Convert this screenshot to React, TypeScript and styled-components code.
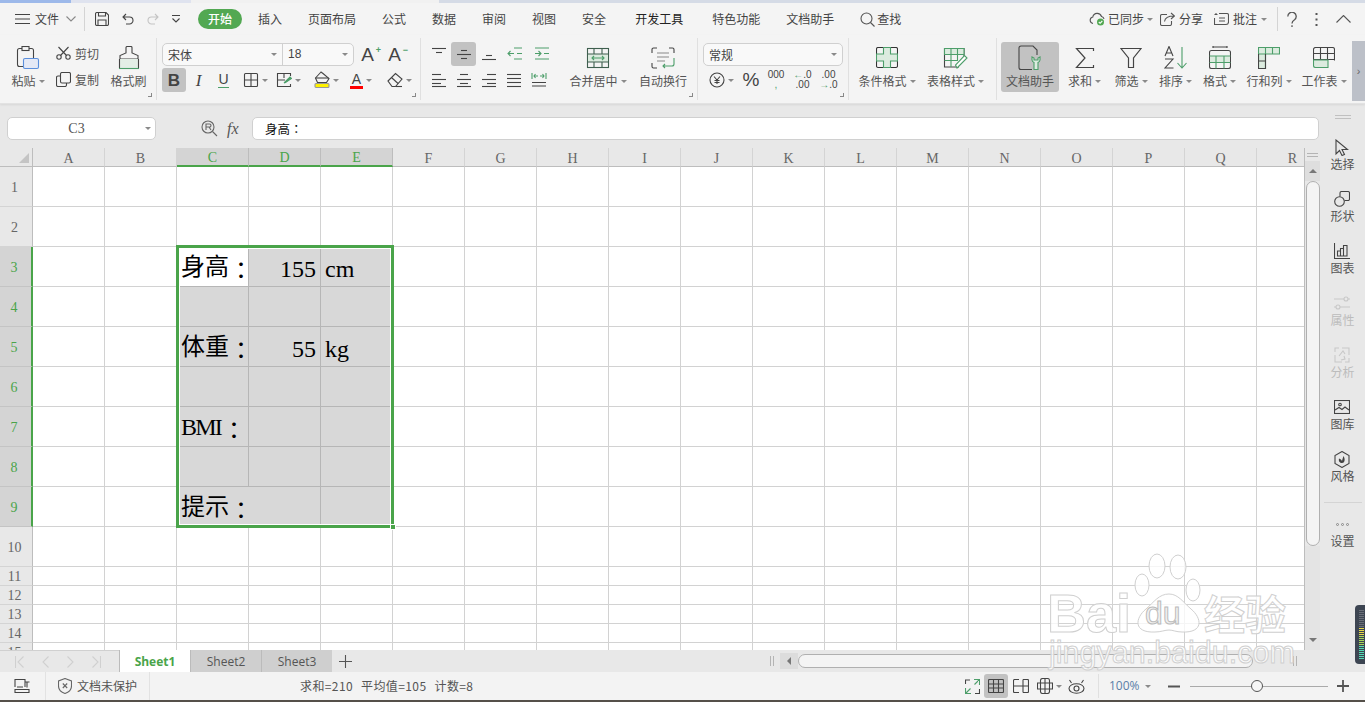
import React from 'react';
import styled, { createGlobalStyle } from 'styled-components';

const colors = {
  text: '#444',
  label: '#555',
  line: '#d2d2d2',
  lineSel: '#b6b6b6',
  sel: '#d8d8d8',
  green: '#4aa44a',
  panel: '#e8e8e8',
  ribbon: '#f4f4f4',
};

const GlobalStyle = createGlobalStyle`
  html, body { margin: 0; padding: 0; background: #e8e8e8; }
  * { box-sizing: border-box; }
  body { font-family: "Noto Sans CJK SC", "Liberation Sans", sans-serif; font-size: 12px; color: #444; }
`;

const Page = styled.div`
  position: relative;
  width: 1365px;
  height: 702px;
  overflow: hidden;
  display: flex;
  flex-direction: column;
`;

/* top strip + menu */
const TopStrip = styled.div`
  height: 3px;
  background: #f1f1f1;
  display: flex;
`;
const StripPart = styled.div<{ $w: number; $c: string }>`
  width: ${({ $w }) => $w}px;
  background: ${({ $c }) => $c};
`;
const MenuRow = styled.div`
  height: 32px;
  background: ${colors.ribbon};
  display: flex;
  align-items: center;
  padding: 0 14px 0 15px;
  line-height: 1;
`;
const Cluster = styled.div<{ $gap?: number; $ml?: number }>`
  display: flex;
  align-items: center;
  gap: ${({ $gap }) => $gap ?? 4}px;
  margin-left: ${({ $ml }) => $ml ?? 0}px;
`;
const MenuSep = styled.div<{ $ml: number; $h?: number }>`
  width: 1px;
  height: ${({ $h }) => $h ?? 24}px;
  background: #d4d4d4;
  margin-left: ${({ $ml }) => $ml}px;
`;
const Pill = styled.div`
  width: 44px;
  height: 20px;
  border-radius: 10px;
  background: #52a852;
  color: #fff;
  display: flex;
  align-items: center;
  justify-content: center;
  margin-left: 18px;
  font-weight: 500;
`;
const MenuTabs = styled.div`
  display: flex;
  align-items: center;
  gap: 26px;
  margin-left: 16px;
`;
const MenuTab = styled.span<{ $extra?: boolean; $dark?: boolean }>`
  margin-left: ${({ $extra }) => ($extra ? 3 : 0)}px;
  color: ${({ $dark }) => ($dark ? '#222' : colors.text)};
  white-space: nowrap;
`;
const MenuRight = styled.div`
  margin-left: auto;
  display: flex;
  align-items: center;
`;

/* ribbon */
const Ribbon = styled.div`
  height: 69px;
  background: ${colors.ribbon};
  display: flex;
  border-bottom: 1px solid #e2e2e2;
  box-shadow: 0 1px 2px rgba(0, 0, 0, 0.08);
  position: relative;
  z-index: 1;
`;
const Group = styled.div<{ $w: number; $pl?: number; $end?: boolean }>`
  position: relative;
  width: ${({ $w }) => $w}px;
  height: 62px;
  margin-top: 3px;
  padding-left: ${({ $pl }) => $pl ?? 0}px;
  display: flex;
  border-right: ${({ $end }) => ($end ? 'none' : '1px solid #e0e0e0')};
`;
const Launcher = styled.span`
  position: absolute;
  right: 4px;
  bottom: 3px;
  width: 4px;
  height: 4px;
  border-right: 1px solid #888;
  border-bottom: 1px solid #888;
`;
const LargeTool = styled.div<{ $w: number; $active?: boolean; $ml?: number }>`
  width: ${({ $w }) => $w}px;
  height: ${({ $active }) => ($active ? 50 : 62)}px;
  margin-left: ${({ $ml }) => $ml ?? 0}px;
  margin-top: ${({ $active }) => ($active ? 4 : 0)}px;
  padding-top: ${({ $active }) => ($active ? 4 : 8)}px;
  display: flex;
  flex-direction: column;
  align-items: center;
  border-radius: 3px;
  background: ${({ $active }) => ($active ? '#c2c2c2' : 'transparent')};
`;
const LargeIcon = styled.div`
  height: 24px;
  display: flex;
  align-items: center;
  justify-content: center;
`;
const LargeLabel = styled.div`
  margin-top: 2px;
  height: 18px;
  line-height: 18px;
  display: flex;
  align-items: center;
  gap: 3px;
  color: ${colors.label};
  white-space: nowrap;
`;
const Caret = styled.span`
  display: inline-block;
  width: 0;
  height: 0;
  border-left: 3px solid transparent;
  border-right: 3px solid transparent;
  border-top: 3px solid #8a8a8a;
  flex: none;
`;
const SmallCol = styled.div`
  width: 45px;
  display: flex;
  flex-direction: column;
  gap: 8px;
  padding-top: 6px;
`;
const SmallTool = styled.div`
  height: 18px;
  display: flex;
  align-items: center;
  gap: 4px;
  color: ${colors.label};
  white-space: nowrap;
`;
const Stack = styled.div`
  display: flex;
  flex-direction: column;
  gap: 2px;
  padding-top: 4px;
`;
const ToolRow = styled.div`
  display: flex;
  align-items: center;
  height: 24px;
`;
const IconBtn = styled.div<{ $w: number; $active?: boolean; $mr?: number }>`
  width: ${({ $w }) => $w}px;
  height: 24px;
  margin-right: ${({ $mr }) => $mr ?? 0}px;
  display: flex;
  align-items: center;
  justify-content: center;
  gap: 3px;
  border-radius: 3px;
  background: ${({ $active }) => ($active ? '#c2c2c2' : 'transparent')};
`;
const ComboBox = styled.div<{ $w: number }>`
  width: ${({ $w }) => $w}px;
  height: 23px;
  background: #f9f9f9;
  border: 1px solid #d0d0d0;
  border-radius: 5px;
  display: flex;
  align-items: stretch;
`;
const ComboPart = styled.div<{ $w?: number; $line?: boolean; $num?: boolean }>`
  flex: ${({ $w }) => ($w ? `0 0 ${$w}px` : '1')};
  display: flex;
  align-items: center;
  justify-content: space-between;
  padding: 0 5px;
  color: ${colors.text};
  border-left: ${({ $line }) => ($line ? '1px solid #d0d0d0' : 'none')};
  font-family: ${({ $num }) => ($num ? '"Liberation Sans", sans-serif' : 'inherit')};
`;
const SizeLetter = styled.span`
  position: relative;
  font-family: "Liberation Sans", sans-serif;
  font-size: 19px;
  color: ${colors.text};
  width: 27px;
  text-align: center;
  line-height: 23px;
`;
const SizeMark = styled.sup`
  position: absolute;
  top: -4px;
  right: 0;
  font-size: 9px;
  color: #4d9e6a;
  font-weight: 700;
`;
const FontLetter = styled.span<{ $kind: 'b' | 'i' | 'u' }>`
  font-family: ${({ $kind }) => ($kind === 'i' ? '"Liberation Serif"' : '"Liberation Sans"')}, sans-serif;
  font-size: ${({ $kind }) => ($kind === 'u' ? 14 : 17)}px;
  font-weight: ${({ $kind }) => ($kind === 'b' ? 700 : 400)};
  font-style: ${({ $kind }) => ($kind === 'i' ? 'italic' : 'normal')};
  line-height: 15px;
  color: ${colors.text};
  border-bottom: ${({ $kind }) => ($kind === 'u' ? '1px solid #4d9e6a' : 'none')};
`;
const ColorLetter = styled.span`
  font-family: "Liberation Sans", sans-serif;
  font-size: 14px;
  line-height: 14px;
  color: ${colors.text};
  border-bottom: 3px solid #f00;
  width: 13px;
  text-align: center;
`;
const NumberMark = styled.span<{ $size?: number }>`
  font-family: "Liberation Sans", sans-serif;
  font-size: ${({ $size }) => $size ?? 10}px;
  line-height: ${({ $size }) => ($size ? 18 : 10)}px;
  color: ${colors.text};
  text-align: center;
  white-space: pre;
`;
const Tint = styled.span`
  color: #4d9e6a;
`;
const CollapseStrip = styled.div`
  width: 13px;
  height: 60px;
  margin-top: 6px;
  background: #bcc0c8;
  display: flex;
  align-items: center;
  justify-content: center;
  color: #666;
  font-size: 11px;
  font-family: "Liberation Sans", sans-serif;
`;

/* work area */
const Work = styled.div`
  height: 546px;
  display: flex;
`;
const Main = styled.div`
  width: 1320px;
  display: flex;
  flex-direction: column;
`;
const FormulaBar = styled.div`
  height: 44px;
  padding: 13px 1px 8px 7px;
  display: flex;
  align-items: stretch;
  background: ${colors.panel};
`;
const NameBox = styled.div`
  width: 149px;
  background: #fff;
  border: 1px solid #d0d0d0;
  border-radius: 5px;
  display: flex;
  align-items: center;
  padding-right: 4px;
`;
const NameText = styled.span`
  flex: 1;
  text-align: center;
  font-family: "Liberation Serif", serif;
  font-size: 14px;
  color: #555;
`;
const FormulaTools = styled.div`
  width: 96px;
  padding-left: 45px;
  display: flex;
  align-items: center;
  gap: 9px;
`;
const Fx = styled.span`
  font-family: "Liberation Serif", serif;
  font-style: italic;
  font-size: 16px;
  color: #555;
`;
const FormulaInput = styled.div`
  flex: 1;
  background: #fff;
  border: 1px solid #d0d0d0;
  border-radius: 5px;
  display: flex;
  align-items: center;
  padding-left: 12px;
  font-family: "Noto Sans CJK TC", sans-serif;
  font-size: 12.5px;
  color: #111;
`;
const SheetRow = styled.div`
  flex: 1;
  display: flex;
  min-height: 0;
`;
const GridClip = styled.div`
  position: relative;
  width: 1304px;
  height: 502px;
  overflow: hidden;
  background: #fff;
`;
const Grid = styled.div`
  display: grid;
  width: 1329px;
  grid-template-columns: 33px repeat(18, 72px);
  grid-template-rows: 19px repeat(10, 40px) repeat(5, 19px);
`;
const Corner = styled.div`
  background: ${colors.panel};
  border-right: 1px solid #bdbdbd;
  border-bottom: 1px solid #bdbdbd;
  display: flex;
  justify-content: flex-end;
  align-items: flex-end;
  padding: 0 3px 3px 0;
`;
const CornerMark = styled.span`
  width: 0;
  height: 0;
  border-left: 10px solid transparent;
  border-bottom: 10px solid #c4c4c4;
`;
const ColHead = styled.div<{ $sel: boolean }>`
  background: ${({ $sel }) => ($sel ? '#d4d4d4' : colors.panel)};
  color: ${({ $sel }) => ($sel ? colors.green : '#666')};
  border-right: 1px solid ${({ $sel }) => ($sel ? '#bdbdbd' : '#d4d4d4')};
  border-bottom: ${({ $sel }) => ($sel ? `2px solid ${colors.green}` : '1px solid #bdbdbd')};
  display: flex;
  align-items: center;
  justify-content: center;
  padding-top: 3px;
  font-family: "Liberation Serif", serif;
  font-size: 14px;
  line-height: 1;
`;
const RowHead = styled.div<{ $sel: boolean }>`
  background: ${({ $sel }) => ($sel ? '#d4d4d4' : colors.panel)};
  color: ${({ $sel }) => ($sel ? colors.green : '#666')};
  border-bottom: 1px solid ${({ $sel }) => ($sel ? '#c4c4c4' : '#d4d4d4')};
  border-right: ${({ $sel }) => ($sel ? `2px solid ${colors.green}` : '1px solid #bdbdbd')};
  display: flex;
  align-items: center;
  justify-content: center;
  padding: 2px 3px 0 0;
  font-family: "Liberation Serif", serif;
  font-size: 14px;
  line-height: 1;
`;
const Cell = styled.div<{ $sel: boolean; $active: boolean; $span?: number; $right?: boolean }>`
  grid-column: span ${({ $span }) => $span ?? 1};
  background: ${({ $sel, $active }) => ($sel && !$active ? colors.sel : '#fff')};
  border-right: 1px solid ${({ $sel }) => ($sel ? colors.lineSel : colors.line)};
  border-bottom: 1px solid ${({ $sel }) => ($sel ? colors.lineSel : colors.line)};
  display: flex;
  align-items: center;
  justify-content: ${({ $right }) => ($right ? 'flex-end' : 'flex-start')};
  padding: 5px 4px 0 4px;
  white-space: nowrap;
  font-family: "Liberation Serif", "Noto Sans CJK TC", serif;
  font-size: 24px;
  line-height: 1;
  color: #000;
`;
const Narrow = styled.span`
  letter-spacing: -1.8px;
  margin-right: 1px;
`;
const Colon = styled.span`
  vertical-align: -4px;
`;
const Selection = styled.div`
  position: absolute;
  left: 176px;
  top: 97px;
  width: 218px;
  height: 283px;
  border: 3px solid ${colors.green};
  box-shadow: inset 0 0 0 1px #fff;
  pointer-events: none;
`;
const Handle = styled.span`
  position: absolute;
  right: -5px;
  bottom: -5px;
  width: 4px;
  height: 4px;
  background: ${colors.green};
  border: 1px solid #fff;
  box-sizing: content-box;
`;
const VScroll = styled.div`
  width: 16px;
  border-left: 1px solid #bdbdbd;
  background: ${colors.panel};
  display: flex;
  flex-direction: column;
  align-items: center;
`;
const ScrollGrip = styled.div`
  width: 11px;
  height: 4px;
  margin-top: 5px;
  border-top: 1px solid #b4b4b4;
  border-bottom: 1px solid #b4b4b4;
`;
const ScrollBtn = styled.div`
  width: 15px;
  height: 20px;
  margin-top: 4px;
  background: #dedede;
  display: flex;
  align-items: center;
  justify-content: center;
`;
const ArrowUp = styled.span`
  border-left: 4px solid transparent;
  border-right: 4px solid transparent;
  border-bottom: 4px solid #777;
`;
const ArrowDown = styled.span`
  border-left: 4px solid transparent;
  border-right: 4px solid transparent;
  border-top: 4px solid #777;
`;
const VThumb = styled.div`
  width: 14px;
  height: 365px;
  margin-left: 1px;
  background: #f4f4f4;
  border: 1px solid #b0b0b0;
  border-radius: 7px;
`;
const VTrack = styled.div`
  flex: 1;
  width: 100%;
  background: #e4e4e4;
  display: flex;
  align-items: flex-end;
  justify-content: center;
  padding-bottom: 8px;
`;

/* side panel */
const Side = styled.div`
  width: 45px;
  background: ${colors.panel};
  display: flex;
  flex-direction: column;
  align-items: center;
`;
const SideGrip = styled.div`
  width: 16px;
  height: 4px;
  margin: 11px 0 19px;
  border-top: 1px solid #c0c0c0;
  border-bottom: 1px solid #c0c0c0;
`;
const SideItem = styled.div<{ $off?: boolean }>`
  height: 52px;
  display: flex;
  flex-direction: column;
  align-items: center;
  color: ${({ $off }) => ($off ? '#bcbcbc' : colors.label)};
  line-height: 16px;
`;
const SideIcon = styled.div`
  height: 18px;
  display: flex;
  align-items: center;
  justify-content: center;
`;
const SideLine = styled.div`
  width: 38px;
  height: 1px;
  background: #d4d4d4;
  margin-bottom: 12px;
`;
const Dots = styled.div`
  height: 18px;
  display: flex;
  gap: 2px;
  align-items: center;
`;
const Dot = styled.span`
  width: 3px;
  height: 3px;
  border: 1px solid #888;
  border-radius: 50%;
`;

/* sheet tabs */
const TabBar = styled.div`
  height: 22px;
  background: ${colors.panel};
  display: flex;
  align-items: stretch;
`;
const SheetNav = styled.div`
  width: 119px;
  padding-left: 15px;
  display: flex;
  align-items: center;
  gap: 18px;
  border-top: 1px solid #d0d0d0;
`;
const SheetTab = styled.div<{ $active?: boolean }>`
  width: 71px;
  display: flex;
  align-items: center;
  justify-content: center;
  font-family: "Open Sans", "Liberation Sans", sans-serif;
  font-size: 12px;
  font-weight: ${({ $active }) => ($active ? 700 : 400)};
  color: ${({ $active }) => ($active ? colors.green : '#555')};
  background: ${({ $active }) => ($active ? '#fff' : '#cfcfcf')};
  border-left: 1px solid #bbb;
`;
const AddSheet = styled.div`
  width: 26px;
  display: flex;
  align-items: center;
  justify-content: center;
`;
const HScrollArea = styled.div`
  flex: 1;
  display: flex;
  align-items: center;
  padding: 0 68px 0 412px;
`;
const SplitMark = styled.span`
  flex: none;
  width: 4px;
  height: 10px;
  border-left: 1px solid #b4b4b4;
  border-right: 1px solid #b4b4b4;
`;
const HBtn = styled.div`
  flex: none;
  width: 18px;
  height: 16px;
  margin-left: 6px;
  background: #dcdcdc;
  display: flex;
  align-items: center;
  justify-content: center;
`;
const ArrowLeft = styled.span`
  border-top: 4px solid transparent;
  border-bottom: 4px solid transparent;
  border-right: 4px solid #777;
`;
const HThumb = styled.div`
  flex: 1;
  height: 14px;
  background: #f4f4f4;
  border: 1px solid #b0b0b0;
  border-radius: 7px;
  margin-right: 40px;
`;

/* status bar */
const StatusBar = styled.div`
  height: 28px;
  background: #f3f3f3;
  display: flex;
  align-items: center;
  color: ${colors.label};
  line-height: 1;
`;
const StatusCell = styled.div<{ $w: number; $pl: number; $line?: boolean }>`
  width: ${({ $w }) => $w}px;
  height: 100%;
  padding-left: ${({ $pl }) => $pl}px;
  display: flex;
  align-items: center;
  gap: 5px;
  border-right: ${({ $line }) => ($line ? '1px solid #e2e2e2' : 'none')};
`;
const Stats = styled.div`
  flex: 1;
  padding-left: 150px;
  display: flex;
  gap: 8px;
  letter-spacing: 0.4px;
`;
const ViewBtn = styled.div<{ $w: number; $active?: boolean }>`
  width: ${({ $w }) => $w}px;
  height: 24px;
  border-radius: 3px;
  display: flex;
  align-items: center;
  justify-content: center;
  gap: 3px;
  background: ${({ $active }) => ($active ? '#c2c2c2' : 'transparent')};
`;
const ZoomValue = styled.div`
  width: 70px;
  height: 24px;
  margin-left: 10px;
  padding-left: 10px;
  display: flex;
  align-items: center;
  gap: 5px;
  color: #5a7ea8;
  border-left: 1px solid #e0e0e0;
  font-family: "Open Sans", "Liberation Sans", sans-serif;
`;
const Slider = styled.div`
  position: relative;
  width: 138px;
  height: 1px;
  background: #aaa;
  margin: 0 9px 0 10px;
`;
const Knob = styled.span`
  position: absolute;
  left: 61px;
  top: -6px;
  width: 12px;
  height: 12px;
  border-radius: 50%;
  background: #f6f6f6;
  border: 1px solid #555;
`;
const BottomEdge = styled.div`
  height: 2px;
  background: #55504a;
`;

/* things that float over the page */
const Watermark = styled.svg`
  position: absolute;
  left: 1042px;
  top: 552px;
  pointer-events: none;
`;
const Meter = styled.div`
  position: absolute;
  right: 0;
  top: 605px;
  width: 10px;
  height: 59px;
  padding: 5px 1px 4px 4px;
  background: #3d4552;
  border-radius: 4px 0 0 4px;
`;
const MeterBars = styled.div`
  height: 100%;
  background:
    repeating-linear-gradient(to bottom, transparent 0 1px, #3d4552 1px 2px),
    linear-gradient(to bottom, #6a6f78 0 36%, #e6d84a 36% 52%, #a8d65a 52% 72%, #53dcb4 72% 100%);
`;

/* icon drawing */
const Glyph = styled.svg<{ $c?: string; $sw?: number }>`
  display: block;
  flex: none;
  fill: none;
  stroke: ${({ $c }) => $c ?? '#444'};
  stroke-width: ${({ $sw }) => $sw ?? 1.1};
`;
type IcoProps = { w?: number; h?: number; c?: string; sw?: number; children: React.ReactNode };
const Ico = ({ w = 16, h = 16, c, sw, children }: IcoProps) => (
  <Glyph width={w} height={h} viewBox={`0 0 ${w} ${h}`} $c={c} $sw={sw}>{children}</Glyph>
);
const G = '#4d9e6a';
const Lines = ({ rows, c }: { rows: number[][]; c?: string }) => (
  <Ico w={16} h={16} c={c}>
    {rows.map(([a, b, y], i) => <path key={i} d={`M${a} ${y + 0.5}H${b}`} />)}
  </Ico>
);

const PasteIcon = () => (
  <Ico w={24} h={24}>
    <rect x="1.5" y="2.5" width="16" height="18" rx="2" />
    <rect x="6" y="0.5" width="7" height="4" fill="#f4f4f4" />
    <rect x="7.5" y="12.5" width="15" height="10" rx="1.5" fill="#e4e9f6" stroke="#5b8fdc" />
  </Ico>
);
const CutIcon = () => (
  <Ico w={15} h={14}>
    <circle cx="3" cy="11" r="2.2" /><circle cx="12" cy="11" r="2.2" />
    <path d="M4.5 9.5 12.5 1M10.5 9.5 2.5 1" />
  </Ico>
);
const CopyIcon = () => (
  <Ico w={15} h={15}>
    <rect x="4.5" y="0.5" width="10" height="10.5" rx="1.5" />
    <path d="M4 4H2a1.5 1.5 0 0 0-1.5 1.5v7.5A1.5 1.5 0 0 0 2 14.500h7a1.500 1.500 0 0 0 1.500-1.500v-2" />
  </Ico>
);
const BrushIcon = () => (
  <Ico w={22} h={24}>
    <path d="M9 .5h4a1 1 0 0 1 1 1V7l6 2.500V13H2V9.500L8 7V1.500a1 1 0 0 1 1-1z" />
    <rect x="1.500" y="13" width="19" height="9.500" fill="#e3eee6" stroke="none" />
    <path d="M1.500 13v9.500M20.500 13v9.500" />
    <path d="M1 22.500h20" stroke={G} />
  </Ico>
);
const BorderIcon = () => (
  <Ico><rect x="1.500" y="1.500" width="13" height="13" rx="1" /><path d="M8 1.500v13M1.500 8h13" /></Ico>
);
const CellFormatIcon = () => (
  <Ico>
    <path d="M14.500 4V1.500h-13v13h13V12M1.500 8H9M8 1.500V6" />
    <path d="M8 11l6-6 1.500 1.500-6 4z" stroke={G} fill={G} />
  </Ico>
);
const FillIcon = () => (
  <Ico w={16} h={18}>
    <path d="M7 1 1.500 7l2 4.500h9L15 7.500 9 2.500z" />
    <path d="M1.500 7h13" />
    <rect x="1" y="12.500" width="14" height="4" rx="1" fill="#fff200" stroke="#999" />
  </Ico>
);
const EraseIcon = () => (
  <Ico w={16} h={16}>
    <path d="M1 9 8.500 1.500 15 7l-6.500 7.500H5z" />
    <path d="M4.500 5.500 11 11.500" />
    <path d="M9 14.500h6" />
  </Ico>
);
const MergeIcon = () => (
  <Ico w={24} h={22} c="#3f5f4f">
    <rect x="1.500" y="1.500" width="21" height="19" />
    <rect x="2" y="7" width="20" height="8" fill="#dcebdf" stroke="none" />
    <path d="M1.500 7h21M1.500 15h21M8 1.500V7M16 1.500V7M8 15v5.500M16 15v5.500" />
    <path d="M6 11h12M8 9l-2 2 2 2M16 9l2 2-2 2" stroke={G} />
  </Ico>
);
const WrapIcon = () => (
  <Ico w={24} h={22}>
    <path d="M1 6V2.500A1.500 1.500 0 0 1 2.500 1H6M18 1h3.500A1.500 1.500 0 0 1 23 2.500V6M1 16v3.500A1.500 1.500 0 0 0 2.500 21H6" />
    <path d="M6 6h12M6 10h12M6 14h8" stroke="#888" />
    <path d="M23 11v6a2 2 0 0 1-2 2H12M14 17l-2 2 2 2" stroke={G} />
  </Ico>
);
const YuanIcon = () => (
  <Ico w={16} h={16}>
    <circle cx="8" cy="8" r="7" />
    <path d="M5 4.500 8 8l3-3.500M8 8v4M5.500 8.500h5M5.500 10.500h5" />
  </Ico>
);
const CondIcon = () => (
  <Ico w={22} h={22} c="#333">
    <rect x=".5" y=".5" width="21" height="20" rx="1.500" />
    <path d="M7.500 .5H14.500V7H21.500V14H14.500V20.500H7.500V14H.5V7H7.500z" fill="#dcebdf" stroke={G} />
  </Ico>
);
const TableStyleIcon = () => (
  <Ico w={26} h={22} c="#444">
    <path d="M16 20H1.500V1.500H21V10" />
    <path d="M1.500 1.500H21V7.500H1.500z" fill="#dcebdf" stroke={G} />
    <path d="M8 1.500V20M14.500 1.500V14M1.500 13.500H14.500" stroke={G} />
    <path d="M14 21l10-10-2.500-2.500-9 9.500z" fill="#fff" stroke={G} />
  </Ico>
);
const DocHelpIcon = () => (
  <Ico w={24} h={26}>
    <path d="M14 24.500H3A2 2 0 0 1 1 22.500V3A2 2 0 0 1 3 1H15L19 5V10" />
    <path d="M14 12v3a3 3 0 0 0 2 2.500V24.500h4V17.500a3 3 0 0 0 2-2.500v-3l-2 1v2h-4v-2z" stroke={G} fill="#dcebdf" />
  </Ico>
);
const SumIcon = () => (
  <Ico w={20} h={22} sw={1.2}><path d="M18.500 4V1.500H1.500L10 11 1.500 20.500H18.500V18" /></Ico>
);
const FilterIcon = () => (
  <Ico w={22} h={22} sw={1.2}>
    <path d="M1 1.500H21L13.500 11V20.500H8.500V11z" />
  </Ico>
);
const SortIcon = () => (
  <Ico w={24} h={24} c="#444">
    <path d="M1 10 5 .5 9 10M2.500 7H7.500" />
    <path d="M1 13H9L1 22H9.500" />
    <path d="M18 1V22M13.500 17l4.500 5 4.500-5" stroke={G} />
  </Ico>
);
const FormatIcon = () => (
  <Ico w={22} h={24}>
    <path d="M4 1H18M4 0v2M18 0v2" />
    <rect x=".5" y="4.500" width="21" height="18" rx="2" />
    <rect x="1" y="10" width="20" height="6.500" fill="#dcebdf" stroke="none" />
    <path d="M.5 10h21M.5 16.500h21M7 10V22.500M15 10V22.500" stroke={G} />
  </Ico>
);
const RowColIcon = () => (
  <Ico w={22} h={22}>
    <path d="M.5 .5H21.500V7H7.500V21.500H.5z" fill="#dcebdf" stroke={G} />
    <path d="M7.500 .5V7M14.500 .5V7M.5 7H7.500" stroke={G} />
    <path d="M.5 7V21.500H7.500V7M.5 14H7.500" />
  </Ico>
);
const SheetIcon = () => (
  <Ico w={22} h={22}>
    <path d="M.5 14V2.500A2 2 0 0 1 2.500 .5H19.500A2 2 0 0 1 21.500 2.500V13.500" />
    <path d="M.5 6.500H21.500M.5 12.500H21.500M7.500 .5V12.500M14.500 .5V12.500" />
    <path d="M.5 13H15V20.500H2.500A2 2 0 0 1 .5 18.500z" fill="#dcebdf" stroke={G} />
  </Ico>
);

const menuTabs: Array<{ t: string; extra?: boolean; dark?: boolean }> = [
  { t: '插入' }, { t: '页面布局' }, { t: '公式' }, { t: '数据' }, { t: '审阅' }, { t: '视图' }, { t: '安全' },
  { t: '开发工具', extra: true, dark: true }, { t: '特色功能', extra: true }, { t: '文档助手' },
];

const colNames = 'ABCDEFGHIJKLMNOPQR'.split('');
const rowNums = Array.from({ length: 15 }, (_, i) => i + 1);
const isSelCol = (c: number) => c >= 2 && c <= 4;
const isSelRow = (r: number) => r >= 3 && r <= 9;

type CellData = { text?: string; right?: boolean; span?: number; hidden?: boolean };
const cellData: Record<string, CellData> = {
  'C3': { text: '身高：' },
  'D3': { text: '155', right: true },
  'E3': { text: 'cm' },
  'C5': { text: '体重：' },
  'D5': { text: '55', right: true },
  'E5': { text: 'kg' },
  'C7': { text: 'BMI：' },
  'C9': { text: '提示：', span: 2 },
  'D9': { hidden: true },
};

const CellText = ({ text }: { text: string }) => {
  if (!text.endsWith('：')) return <span>{text}</span>;
  const body = text.slice(0, -1);
  return (
    <span>
      {body === 'BMI' ? <Narrow>{body}</Narrow> : body}
      <Colon>：</Colon>
    </span>
  );
};

const Large = ({ w, ml, label, caret, active, children }: { w: number; ml?: number; label: string; caret?: boolean; active?: boolean; children: React.ReactNode }) => (
  <LargeTool $w={w} $ml={ml} $active={active}>
    <LargeIcon>{children}</LargeIcon>
    <LargeLabel>{label}{caret && <Caret />}</LargeLabel>
  </LargeTool>
);

const App = () => {
  return (
    <Page>
      <GlobalStyle />
      <TopStrip>
        <StripPart $w={71} $c="#9db9ea" />
        <StripPart $w={120} $c="#dfe3ef" />
        <StripPart $w={248} $c="#f1f1f1" />
        <StripPart $w={926} $c="#d5dbe6" />
      </TopStrip>

      <MenuRow>
        <Ico w={15} h={12}><path d="M0 1.500H15M0 6H15M0 10.500H15" /></Ico>
        <Cluster $ml={5} $gap={7}>
          <span>文件</span>
          <Ico w={10} h={6} c="#888"><path d="M.5 .5 5 5 9.500 .5" /></Ico>
        </Cluster>
        <MenuSep $ml={8} />
        <Cluster $ml={10} $gap={13}>
          <Ico w={14} h={14}><path d="M.5 2A1.500 1.500 0 0 1 2 .5H11L13.500 3V12A1.500 1.500 0 0 1 12 13.500H2A1.500 1.500 0 0 1 .5 12zM3.500 .5V4H10.500V.5M3 13.500V8H11V13.500" /></Ico>
          <Ico w={12} h={12}><path d="M4 1 1 4l3 3M1 4H7.500a3.500 3.500 0 0 1 0 7H4" /></Ico>
          <Ico w={12} h={12} c="#c4c4c4"><path d="M8 1l3 3-3 3M11 4H4.500a3.500 3.500 0 0 0 0 7H8" /></Ico>
          <Ico w={8} h={8}><path d="M0 .5H8M.5 3.500 4 7 7.500 3.500" /></Ico>
        </Cluster>
        <Pill>开始</Pill>
        <MenuTabs>
          {menuTabs.map((m) => <MenuTab key={m.t} $extra={m.extra} $dark={m.dark}>{m.t}</MenuTab>)}
          <Cluster $gap={2}>
            <Ico w={15} h={15} c="#555"><circle cx="6.500" cy="6.500" r="5.500" /><path d="M10.500 10.500 14.500 14.500" /></Ico>
            <span>查找</span>
          </Cluster>
        </MenuTabs>
        <MenuRight>
          <Cluster $gap={3}>
            <Ico w={16} h={14} c="#555">
              <path d="M4 11.500A3.300 3.300 0 0 1 3.800 5 4.500 4.500 0 0 1 12.500 4.500 3 3 0 0 1 15 7" />
              <circle cx="11.500" cy="10" r="3.500" fill="#52a852" stroke="none" />
              <path d="M9.800 10l1.300 1.300 2.200-2.300" stroke="#fff" />
            </Ico>
            <span>已同步</span>
            <Caret />
          </Cluster>
          <Cluster $ml={7}>
            <Ico w={15} h={14} c="#555"><path d="M7 2.500H2A1.500 1.500 0 0 0 .5 4v8A1.500 1.500 0 0 0 2 13.500H10A1.500 1.500 0 0 0 11.500 12V9M4.500 9.500C5 6 8 4 14 4M11 1l3.500 3L11 7" /></Ico>
            <span>分享</span>
          </Cluster>
          <Cluster $ml={11}>
            <Ico w={15} h={14} c="#555"><path d="M2 2.500V1M2 12.500H12A2.500 2.500 0 0 0 14.500 10V3A1.500 1.500 0 0 0 13 1.500H5M.5 2.500H3.500M.5 6V12.500H2M5 6H11M5 9H11" /></Ico>
            <span>批注</span>
            <Caret />
          </Cluster>
          <MenuSep $ml={10} />
          <Cluster $ml={9} $gap={18}>
            <Ico w={10} h={15} sw={1.3} c="#555"><path d="M.8 4.500A4.200 4.200 0 1 1 7.500 7.800C6 8.800 5 9.500 5 11.500M5 13.200V15" /></Ico>
            <Ico w={3} h={13} sw={2} c="#555"><path d="M1.500 0V2M1.500 5.500V7.500M1.500 11V13" /></Ico>
            <Ico w={15} h={8} c="#555"><path d="M.5 7.500 7.500 .5 14.500 7.500" /></Ico>
          </Cluster>
        </MenuRight>
      </MenuRow>

      <Ribbon>
        <Group $w={157}>
          <Large w={56} label="粘贴" caret><PasteIcon /></Large>
          <SmallCol>
            <SmallTool><CutIcon />剪切</SmallTool>
            <SmallTool><CopyIcon />复制</SmallTool>
          </SmallCol>
          <Large w={55} label="格式刷"><BrushIcon /></Large>
          <Launcher />
        </Group>

        <Group $w={264} $pl={5}>
          <Stack>
            <ToolRow>
              <ComboBox $w={192}>
                <ComboPart><span>宋体</span><Caret /></ComboPart>
                <ComboPart $w={71} $line $num><span>18</span><Caret /></ComboPart>
              </ComboBox>
              <SizeLetter>A<SizeMark>+</SizeMark></SizeLetter>
              <SizeLetter>A<SizeMark>−</SizeMark></SizeLetter>
            </ToolRow>
            <ToolRow>
              <IconBtn $w={24} $active><FontLetter $kind="b">B</FontLetter></IconBtn>
              <IconBtn $w={25}><FontLetter $kind="i">I</FontLetter></IconBtn>
              <IconBtn $w={25}><FontLetter $kind="u">U</FontLetter></IconBtn>
              <IconBtn $w={38}><BorderIcon /><Caret /></IconBtn>
              <IconBtn $w={28} $mr={6}><CellFormatIcon /><Caret /></IconBtn>
              <IconBtn $w={36}><FillIcon /><Caret /></IconBtn>
              <IconBtn $w={34}><ColorLetter>A</ColorLetter><Caret /></IconBtn>
              <IconBtn $w={42}><EraseIcon /><Caret /></IconBtn>
            </ToolRow>
          </Stack>
          <Launcher />
        </Group>

        <Group $w={277} $pl={5}>
          <Stack>
            <ToolRow>
              <IconBtn $w={25}><Lines rows={[[1, 15, 2], [5, 11, 6]]} /></IconBtn>
              <IconBtn $w={25} $active><Lines rows={[[5, 11, 4], [1, 15, 8], [5, 11, 12]]} /></IconBtn>
              <IconBtn $w={25}><Lines rows={[[5, 11, 9], [1, 15, 13]]} /></IconBtn>
              <IconBtn $w={28}>
                <Ico><path d="M7 2H15M7 13H15M10 7.500H15M1 7.500H7M3.500 5 1 7.500 3.500 10" stroke={G} /></Ico>
              </IconBtn>
              <IconBtn $w={25}>
                <Ico><path d="M1 2H15M1 13H15M10 7.500H15M1 7.500H7M4.500 5 7 7.500 4.500 10" stroke={G} /></Ico>
              </IconBtn>
            </ToolRow>
            <ToolRow>
              <IconBtn $w={25}><Lines rows={[[1, 10, 2], [1, 15, 7], [1, 10, 11], [1, 15, 14]]} /></IconBtn>
              <IconBtn $w={25}><Lines rows={[[4, 12, 2], [1, 15, 7], [4, 12, 11], [1, 15, 14]]} /></IconBtn>
              <IconBtn $w={25}><Lines rows={[[6, 15, 2], [1, 15, 7], [6, 15, 11], [1, 15, 14]]} /></IconBtn>
              <IconBtn $w={25}><Lines rows={[[1, 15, 2], [1, 15, 6], [1, 15, 10], [1, 15, 14]]} /></IconBtn>
              <IconBtn $w={25}>
                <Ico><path d="M1 10.500H15M1 14H15" /><path d="M1 1V7M15 1V7M3 4H7M13 4H9M4.500 2 3 4 4.500 6M11.500 2 13 4 11.500 6" stroke={G} /></Ico>
              </IconBtn>
            </ToolRow>
          </Stack>
          <Large w={66} ml={11} label="合并居中" caret><MergeIcon /></Large>
          <Large w={64} label="自动换行"><WrapIcon /></Large>
          <Launcher />
        </Group>

        <Group $w={151} $pl={5}>
          <Stack>
            <ToolRow>
              <ComboBox $w={140}>
                <ComboPart><span>常规</span><Caret /></ComboPart>
              </ComboBox>
            </ToolRow>
            <ToolRow>
              <IconBtn $w={36}><YuanIcon /><Caret /></IconBtn>
              <IconBtn $w={24}><NumberMark $size={19}>%</NumberMark></IconBtn>
              <IconBtn $w={26}><NumberMark>000{'\n'}<Tint>,</Tint></NumberMark></IconBtn>
              <IconBtn $w={27}><NumberMark><Tint>←</Tint>.0{'\n'}.00</NumberMark></IconBtn>
              <IconBtn $w={25}><NumberMark>.00{'\n'}<Tint>→</Tint>.0</NumberMark></IconBtn>
            </ToolRow>
          </Stack>
          <Launcher />
        </Group>

        <Group $w={148} $pl={4}>
          <Large w={68} label="条件格式" caret><CondIcon /></Large>
          <Large w={69} label="表格样式" caret><TableStyleIcon /></Large>
        </Group>

        <Group $w={355} $pl={4} $end>
          <Large w={58} label="文档助手" active><DocHelpIcon /></Large>
          <Large w={47} ml={2} label="求和" caret><SumIcon /></Large>
          <Large w={46} label="筛选" caret><FilterIcon /></Large>
          <Large w={43} label="排序" caret><SortIcon /></Large>
          <Large w={45} label="格式" caret><FormatIcon /></Large>
          <Large w={54} label="行和列" caret><RowColIcon /></Large>
          <Large w={56} label="工作表" caret><SheetIcon /></Large>
        </Group>
        <CollapseStrip>›</CollapseStrip>
      </Ribbon>

      <Work>
        <Main>
          <FormulaBar>
            <NameBox><NameText>C3</NameText><Caret /></NameBox>
            <FormulaTools>
              <Ico w={17} h={17} c="#666"><circle cx="7" cy="7" r="6" /><path d="M5 10V4H8.500a1.500 1.500 0 0 1 0 3H5M8 7 10 10M11.500 11.500 16 16" /></Ico>
              <Fx>fx</Fx>
            </FormulaTools>
            <FormulaInput>身高：</FormulaInput>
          </FormulaBar>
          <SheetRow>
            <GridClip>
              <Grid>
                <Corner><CornerMark /></Corner>
                {colNames.map((c, i) => <ColHead key={c} $sel={isSelCol(i)}>{c}</ColHead>)}
                {rowNums.map((r) => (
                  <React.Fragment key={r}>
                    <RowHead $sel={isSelRow(r)}>{r}</RowHead>
                    {colNames.map((c, i) => {
                      const id = `${c}${r}`;
                      const d = cellData[id] ?? {};
                      if (d.hidden) return null;
                      return (
                        <Cell key={id} $sel={isSelCol(i) && isSelRow(r)} $active={id === 'C3'} $span={d.span} $right={d.right}>
                          {d.text && <CellText text={d.text} />}
                        </Cell>
                      );
                    })}
                  </React.Fragment>
                ))}
              </Grid>
              <Selection><Handle /></Selection>
            </GridClip>
            <VScroll>
              <ScrollGrip />
              <ScrollBtn><ArrowUp /></ScrollBtn>
              <VThumb />
              <VTrack><ArrowDown /></VTrack>
            </VScroll>
          </SheetRow>
        </Main>
        <Side>
          <SideGrip />
          <SideItem>
            <SideIcon><Ico w={14} h={17}><path d="M1 1V15L4.500 11.500 7 16.500 9.500 15.500 7 10.500H12.500z" /></Ico></SideIcon>
            选择
          </SideItem>
          <SideItem>
            <SideIcon><Ico w={16} h={16}><circle cx="5.500" cy="10.500" r="4.800" /><path d="M6 5.500V2A1.500 1.500 0 0 1 7.500 .5H14A1.500 1.500 0 0 1 15.500 2V8A1.500 1.500 0 0 1 14 9.500H10.500" /></Ico></SideIcon>
            形状
          </SideItem>
          <SideItem>
            <SideIcon><Ico w={16} h={16}><path d="M.5 0V15.500H16M3.500 13V8H6.500V13zM6.500 13V5.500H9.500V13M9.500 13V2.500H13V13H3.500" /></Ico></SideIcon>
            图表
          </SideItem>
          <SideItem $off>
            <SideIcon><Ico w={16} h={16} c="#c8c8c8"><path d="M0 4H10M14 4H16M0 12H2M6 12H16" /><circle cx="12" cy="4" r="2" /><circle cx="4" cy="12" r="2" /></Ico></SideIcon>
            属性
          </SideItem>
          <SideItem $off>
            <SideIcon><Ico w={16} h={16} c="#c8c8c8"><path d="M1 5V1H5M15 11V15H11M1 8V15H8M8 1H15V8M5 9 9 4l2 3M7 13l4-1-1-3" /></Ico></SideIcon>
            分析
          </SideItem>
          <SideItem>
            <SideIcon><Ico w={16} h={14}><rect x=".5" y=".5" width="15" height="13" /><circle cx="6" cy="4.500" r="1.300" /><path d="M1 10 5 7.500 8 9.500 11 7 15 10" /></Ico></SideIcon>
            图库
          </SideItem>
          <SideItem>
            <SideIcon><Ico w={16} h={17}><path d="M8 .5 15 4.500V12.500L8 16.500 1 12.500V4.500z" /><path d="M8 12C5 12 4.500 9.500 5 7.500 6.500 8 7.500 9 8 10 8.500 8 9 6 9.500 5 11 7 11.500 12 8 12z" fill="#444" stroke="none" /></Ico></SideIcon>
            风格
          </SideItem>
          <SideLine />
          <SideItem>
            <Dots><Dot /><Dot /><Dot /></Dots>
            设置
          </SideItem>
        </Side>
      </Work>

      <TabBar>
        <SheetNav>
          <Ico w={9} h={12} c="#d0d0d0"><path d="M.5 0V12M8.500 .5 3 6l5.500 5.500" /></Ico>
          <Ico w={7} h={12} c="#d0d0d0"><path d="M6.500 .5 1 6l5.500 5.500" /></Ico>
          <Ico w={7} h={12} c="#d0d0d0"><path d="M.5 .5 6 6 .5 11.500" /></Ico>
          <Ico w={9} h={12} c="#d0d0d0"><path d="M8.500 0V12M.5 .5 6 6 .5 11.500" /></Ico>
        </SheetNav>
        <SheetTab $active>Sheet1</SheetTab>
        <SheetTab>Sheet2</SheetTab>
        <SheetTab>Sheet3</SheetTab>
        <AddSheet><Ico w={13} h={13} c="#555"><path d="M6.500 0V13M0 6.500H13" /></Ico></AddSheet>
        <HScrollArea>
          <SplitMark />
          <HBtn><ArrowLeft /></HBtn>
          <HThumb />
          <SplitMark />
        </HScrollArea>
      </TabBar>

      <StatusBar>
        <StatusCell $w={46} $pl={14} $line>
          <Ico w={17} h={16}><path d="M1 9V1.500H11V9M11 4H15.500M13 4V9.500M1 11.500H15V14.500H1zM3 9H9" /></Ico>
        </StatusCell>
        <StatusCell $w={104} $pl={12} $line>
          <Ico w={14} h={16} c="#666"><path d="M7 .5 13.500 3V8C13.500 12 10 14.500 7 15.500 4 14.500 .5 12 .5 8V3z" /><path d="M4.800 5.500 9.200 10M9.200 5.500 4.800 10" /></Ico>
          文档未保护
        </StatusCell>
        <Stats>
          <span>求和=210</span>
          <span>平均值=105</span>
          <span>计数=8</span>
        </Stats>
        <Cluster $gap={0}>
          <ViewBtn $w={24}>
            <Ico w={15} h={15}><path d="M9 .5H14.500V6M.5 9V14.500H6M14 1 9.500 5.500M1 14 5.500 9.500" stroke={G} /><path d="M.5 5V1H5M14.500 10V14.500H10" /></Ico>
          </ViewBtn>
          <ViewBtn $w={24} $active>
            <Ico w={16} h={14}><rect x=".5" y=".5" width="15" height="13" rx="1" /><path d="M.5 5H15.500M.5 9H15.500M5.500 .5V13.500M10.500 .5V13.500" /></Ico>
          </ViewBtn>
          <ViewBtn $w={26}>
            <Ico w={16} h={14}><path d="M6 .5H1.500A1 1 0 0 0 .5 1.500V12.500A1 1 0 0 0 1.500 13.500H6M10 .5H14.500A1 1 0 0 1 15.500 1.500V12.500A1 1 0 0 1 14.500 13.500H10M.5 7H15.500M10 .5V13.500" /></Ico>
          </ViewBtn>
          <ViewBtn $w={30}>
            <Ico w={16} h={16}><rect x="3.500" y=".5" width="9" height="15" rx="2" /><path d="M.5 5H15.500V11H.5zM8 .5V15.500" /></Ico>
            <Caret />
          </ViewBtn>
          <ViewBtn $w={24}>
            <Ico w={17} h={15}><ellipse cx="8.500" cy="9.500" rx="7.500" ry="4.800" /><circle cx="8.500" cy="9.500" r="2.500" /><path d="M1.500 1 3.500 4M15.500 1 13.500 4" /></Ico>
          </ViewBtn>
        </Cluster>
        <ZoomValue>100%<Caret /></ZoomValue>
        <Ico w={12} h={3} c="#555" sw={2}><path d="M0 1.500H12" /></Ico>
        <Slider><Knob /></Slider>
        <Ico w={12} h={12} c="#555" sw={1.8}><path d="M6 0V12M0 6H12" /></Ico>
        <span style={{ width: 16 }} />
      </StatusBar>
      <BottomEdge />

      <Watermark width="252" height="124" viewBox="0 0 252 124">
        <g fill="#fff" fillOpacity="0.78" stroke="#d0d0d0" strokeWidth="1">
          <ellipse cx="115" cy="14" rx="8" ry="12" />
          <ellipse cx="136" cy="15" rx="8" ry="12" />
          <ellipse cx="100" cy="33" rx="7" ry="11" />
          <ellipse cx="151" cy="38" rx="7" ry="11" />
          <path d="M127 42c9 0 14 8 22 15 11 9 13 24-9 23-6 0-9-2-13-2s-8 2-14 2c-22 1-20-14-9-23 8-7 13-15 23-15z" />
          <text x="103" y="72" fontFamily="Liberation Sans" fontSize="32" fontWeight="400" fill="#eee" stroke="#bbb">du</text>
          <text x="5" y="80" fontFamily="Liberation Sans" fontSize="54" fontWeight="700">Bai</text>
          <text x="162" y="78" fontFamily="Noto Sans CJK SC" fontSize="41" fontWeight="700">经验</text>
          <text x="7" y="111" fontFamily="Liberation Sans" fontSize="30.500">jingyan.baidu.com</text>
        </g>
      </Watermark>
      <Meter><MeterBars /></Meter>
    </Page>
  );
};

export default App;
